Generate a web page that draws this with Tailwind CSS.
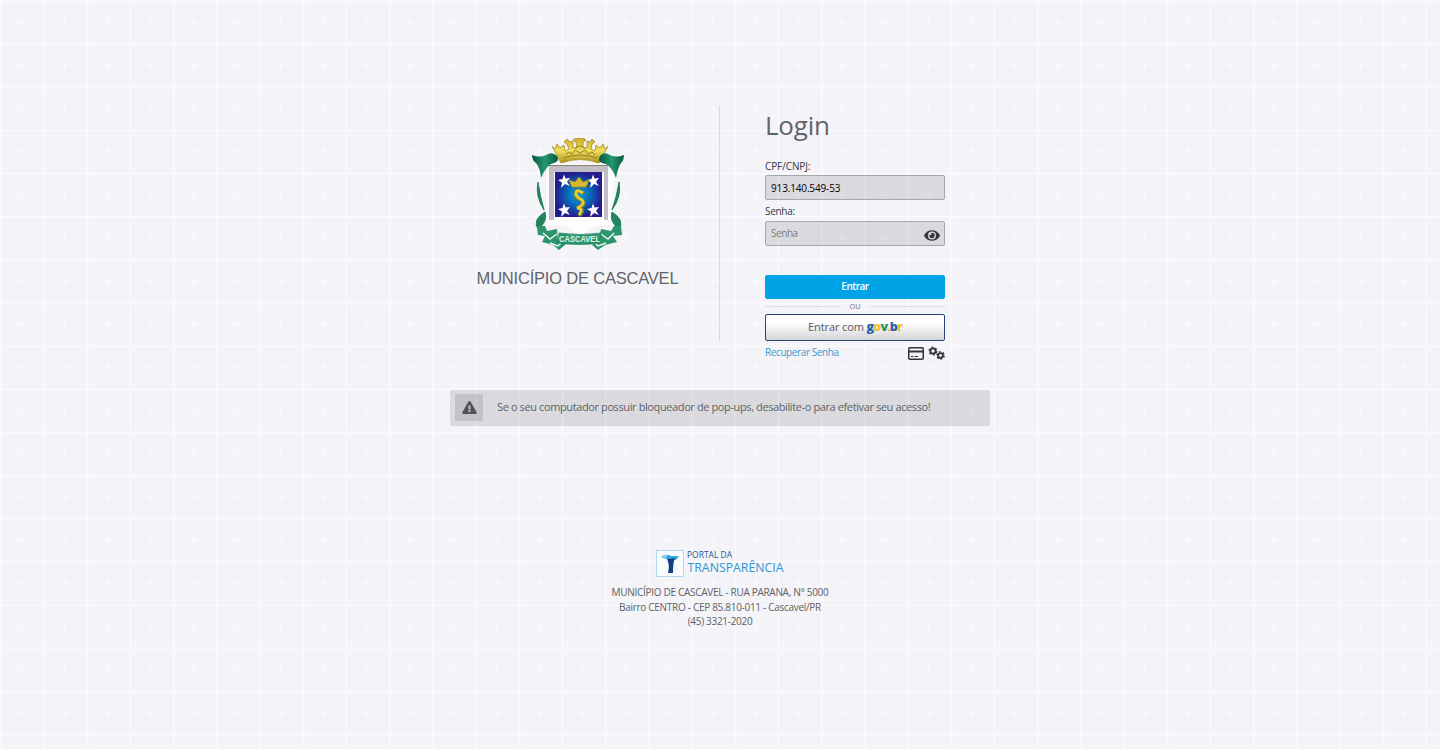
<!DOCTYPE html>
<html lang="pt-BR">
<head>
<meta charset="utf-8">
<title>Login</title>
<script src="https://cdn.jsdelivr.net/npm/@tailwindcss/browser@4"></script>
</head>
<body class="relative h-[749px] overflow-hidden bg-[#f3f3f8] font-['Open_Sans','Noto_Sans',sans-serif] text-[#58595b]">
<svg class="absolute inset-0 h-full w-full" aria-hidden="true">
  <defs>
    <pattern id="grid" width="43.2" height="43.15" patternUnits="userSpaceOnUse" x="0.2" y="0.3">
      <path d="M.7 0V43.2M0 .7H43.2" stroke="#fbfbfd" stroke-width="1.6"/>
      <path d="M21 16V28M15 22H28" stroke="#f8f8fc" stroke-width="1"/>
      <circle cx="21.300" cy="22" r="1.300" fill="#fdfdff"/>
    </pattern>
  </defs>
  <rect width="100%" height="100%" fill="url(#grid)"/>
</svg>
<main class="relative mx-auto flex w-[540px] flex-col pt-[106px]">
  <div class="flex h-[284px]">
    <section class="flex h-[235px] w-[270px] flex-col items-center border-r border-[#d9d9de] pt-8">
      <svg class="-ml-[10px] h-[114px] w-[96px]" viewBox="0 0 96 114">
        <defs>
          <radialGradient id="blue"><stop offset="0" stop-color="#08a9df"/><stop offset=".5" stop-color="#0768b8"/><stop offset="1" stop-color="#241b8e"/></radialGradient>
          <linearGradient id="gold" x2="0" y2="1"><stop stop-color="#c7ac2c"/><stop offset=".5" stop-color="#f1df5c"/><stop offset="1" stop-color="#a99022"/></linearGradient>
          <linearGradient id="green" x2="1"><stop stop-color="#05583f"/><stop offset=".5" stop-color="#26986e"/><stop offset="1" stop-color="#05583f"/></linearGradient>
        </defs>
        <path d="M14 26H82V88Q66 85 57 92L48 99L39 92Q30 85 14 88Z" fill="#fdfdfe"/>
        <path d="M29 25L20 8L23 11L25 6L28 10L32 7L33 13L37 11L35 6L32 4L35 1L38 4L41 3L41 10L45 10L44 4L41 2L44 0H51L54 2L51 4L51 10L55 10L55 3L58 4L60 1L63 4L60 6L59 11L63 13L64 7L68 10L71 6L73 11L76 8L67 25Q48 18 29 25Z" fill="url(#gold)" stroke="#a98d1c" stroke-width=".8"/>
        <path d="M31 20Q48 14 65 20M34 16L37 14L40 16L43 12L48 15L53 12L56 16L60 14L63 17M43 10Q48 6 53 10" fill="none" stroke="#96801f" stroke-width="1"/>
        <path d="M0 17Q8 20 14 17Q20 13 25 18Q28 23 22 25Q15 26 9 40Q8 29 4 25Q0 22 0 17Z" fill="url(#green)"/>
        <path d="M92 17Q84 20 78 17Q72 13 68 18Q65 23 70 25Q79 26 84 40Q86 29 89 25Q92 22 92 17Z" fill="url(#green)"/>
        <path d="M6 44Q3 58 12 72Q8 58 6 44M13 74Q0 82 6 91Q16 84 13 74M87 44Q90 58 80 72Q85 58 87 44M80 74Q93 82 87 91Q77 84 80 74" fill="#24835d" stroke="#24835d"/>
        <path d="M17 28H76V82H72V34H22V82H17Z" fill="#c3bdc8"/><path d="M17 27.500H77" stroke="#86816f"/>
        <path d="M23 34H70V79H23Z" fill="url(#blue)"/>
        <g fill="#fff"><path id="star" d="M32 36.500L33.600 40.500L38 40L35 44L38 48L33 46L29 50L30 44.500L26 42L30.500 41Z"/><use href="#star" x="29"/><use href="#star" y="29"/><use href="#star" x="29" y="29"/></g>
        <path d="M40 49L37 42L43 44L47 39L51 44L57 42L54 49Z" fill="#d8b932" stroke="#9c8a22"/>
        <path d="M52 56Q44 50 43 56Q42 60 49 62Q56 67 45 70Q55 69 47 78" fill="none" stroke="#537c46" stroke-width="4"/>
        <path d="M51 55Q44 50 44 56Q44 59 50 62Q54 66 45 70Q52 70 47 77" fill="none" stroke="#edc932" stroke-width="3"/>
        <path d="M5 88L13 88L15 93L25 91L26 101L34 106L27 112L21 107L10 104L13 98L6 97ZM89 88L82 88L79 93L69 91L67 101L60 107L66 112L73 107L85 104L81 98L90 97Z" fill="#2c956d"/>
        <path d="M11 95L18 101L25 96M82 95L76 101L69 96M18 105L26 108L30 104M74 105L66 108L62 104" fill="none" stroke="#eaf7ef" stroke-width="1.500"/>
        <path d="M27 95Q48 98 69 95L67 105Q48 108 26 105Z" fill="#2c956d" stroke="#176e4d" stroke-width=".6"/>
        <text x="27" y="103.500" font-family="Liberation Sans" font-size="8.500" font-weight="bold" textLength="41" lengthAdjust="spacingAndGlyphs" fill="#d9f5e7">CASCAVEL</text>
      </svg>
      <h2 class="-ml-[14px] mt-[15px] whitespace-nowrap font-['Liberation_Sans',sans-serif] text-[16.5px] leading-[22px] tracking-[-0.2px] text-[#626367]">MUNICÍPIO DE CASCAVEL</h2>
    </section>
    <section class="ml-[45px] flex w-[180px] flex-col text-[10px]">
      <h1 class="mt-px h-[51px] text-[26px] leading-[36px] tracking-[-0.2px] text-[#636467]">Login</h1>
      <label class="h-[17px] leading-4 tracking-[-0.1px] text-[#37383b]">CPF/CNPJ:</label>
      <div class="flex h-[25px] items-center rounded-[2px] border border-[#a6a6ae] bg-black/10 px-[5px] pt-px tracking-[-0.15px] text-black">913.140.549-53</div>
      <label class="mt-[3px] h-[18px] leading-4 tracking-[-0.3px] text-[#37383b]">Senha:</label>
      <div class="flex h-[25px] items-center justify-between rounded-[2px] border border-[#a6a6ae] bg-black/10 pl-[5px] pr-1 text-[#7b7b80]"><span class="-mt-px tracking-[-0.45px]">Senha</span>
        <svg class="mt-[4px] h-[15px] w-[16px]" viewBox="0 0 576 512" fill="#39393d"><path d="M573 241C518 136 411 64 288 64S58 136 3 241a32 32 0 0 0 0 30c55 105 162 177 285 177s230-72 285-177a32 32 0 0 0 0-30zM288 400a144 144 0 1 1 0-288 144 144 0 0 1 0 288zm0-240a95 95 0 0 0-25 4 48 48 0 0 1-67 67 96 96 0 1 0 92-71z"/></svg>
      </div>
      <button class="mt-[29px] h-[24px] rounded-[2px] bg-[#00a4e6] pb-px font-semibold tracking-[-0.5px] text-white">Entrar</button>
      <div class="flex h-[15px] items-center gap-[9px] text-[8px] text-[#717176]"><i class="h-px flex-1 bg-[#dcdce1]"></i><span class="w-[11px] text-center text-[7.5px]">OU</span><i class="h-px flex-1 bg-[#dcdce1]"></i></div>
      <button class="flex h-[27px] items-center justify-center rounded-[2px] border border-[#244479] bg-linear-to-b from-white from-30% to-[#d5d5d8] text-[11px] tracking-[-0.1px] text-[#57585c]">Entrar com&nbsp;<b class="text-[12.5px] font-extrabold tracking-[-0.9px]"><span class="text-[#2864ae]">g</span><span class="text-[#f7bd25]">o</span><span class="text-[#239653]">v</span><span class="text-[#f7bd25]">.</span><span class="text-[#2864ae]">b</span><span class="text-[#f7bd25]">r</span></b></button>
      <div class="flex h-[24px] items-center tracking-[-0.4px] text-[#3f98cf]"><a class="-mt-px mr-auto">Recuperar Senha</a>
        <svg class="h-[13px] w-4" viewBox="0 0 16 13"><rect x=".75" y=".75" width="14.500" height="11.500" rx="1" fill="none" stroke="#333338" stroke-width="1.500"/><path d="M1 4.500H15" stroke="#333338" stroke-width="2"/><path d="M3 9.500H5.500M6.500 9.500H10" stroke="#333338" stroke-width="1.200"/></svg>
        <svg class="ml-1 h-[14px] w-[17px]" viewBox="0 0 17 14" fill="none" stroke="#333338"><circle cx="5" cy="5" r="2.600" stroke-width="1.900"/><circle cx="5" cy="5" r="3.900" stroke-width="1.200" stroke-dasharray="2.042"/><circle cx="12.500" cy="9.500" r="2.400" stroke-width="1.900"/><circle cx="12.500" cy="9.500" r="3.700" stroke-width="1.200" stroke-dasharray="1.937"/></svg>
      </div>
    </section>
  </div>
  <div class="flex h-9 items-center rounded-[2px] bg-black/10 pl-[5px] text-[11px] text-[#616166]">
    <div class="-mt-px flex h-[27px] w-7 items-center justify-center bg-black/10"><svg class="h-[13px] w-[15px]" viewBox="0 0 576 512" fill="#515156"><path d="M570 440c18 32-5 72-42 72H48c-37 0-60-40-41-72L247 24c18-32 64-32 82 0zM288 354a46 46 0 1 0 0 92 46 46 0 0 0 0-92zm-44-165l8 136c0 6 6 11 12 11h48c6 0 12-5 12-11l8-136c0-7-5-13-12-13h-64c-7 0-12 6-12 13z"/></svg></div>
    <p class="ml-[14px] -mt-px whitespace-nowrap tracking-[-0.39px]">Se o seu computador possuir bloqueador de pop-ups, desabilite-o para efetivar seu acesso!</p>
  </div>
  <footer class="mt-[122px] flex flex-col items-center text-[10px] leading-[14.5px] tracking-[-0.3px] text-[#606065]">
    <svg class="h-[32px] w-[129px] overflow-visible" viewBox="0 0 129 32">
      <rect x=".5" y="2.500" width="27" height="26" fill="#f8fcff" stroke="#b5d8ef"/>
      <path d="M5 9Q10 5 15 8L23 8L20 12Q11 12 5 9Z" fill="#36a8dd"/><path d="M5 8L11 7L10 10Z" fill="#98d5f2"/><path d="M11 11L19 10Q17 13 17 25H12Q14 17 11 11Z" fill="#153f81"/>
      <text x="31" y="9.500" font-size="8.500" fill="#28558f" textLength="45" lengthAdjust="spacingAndGlyphs" letter-spacing="0">PORTAL DA</text>
      <text x="31.500" y="23.500" font-size="12.500" fill="#2b98d3" textLength="96" lengthAdjust="spacingAndGlyphs" letter-spacing="0">TRANSPARÊNCIA</text>
    </svg>
    <p class="mt-[5px]">MUNICÍPIO DE CASCAVEL - RUA PARANA, N° 5000</p>
    <p>Bairro CENTRO - CEP 85.810-011 - Cascavel/PR</p>
    <p>(45) 3321-2020</p>
  </footer>
</main>
</body>
</html>
